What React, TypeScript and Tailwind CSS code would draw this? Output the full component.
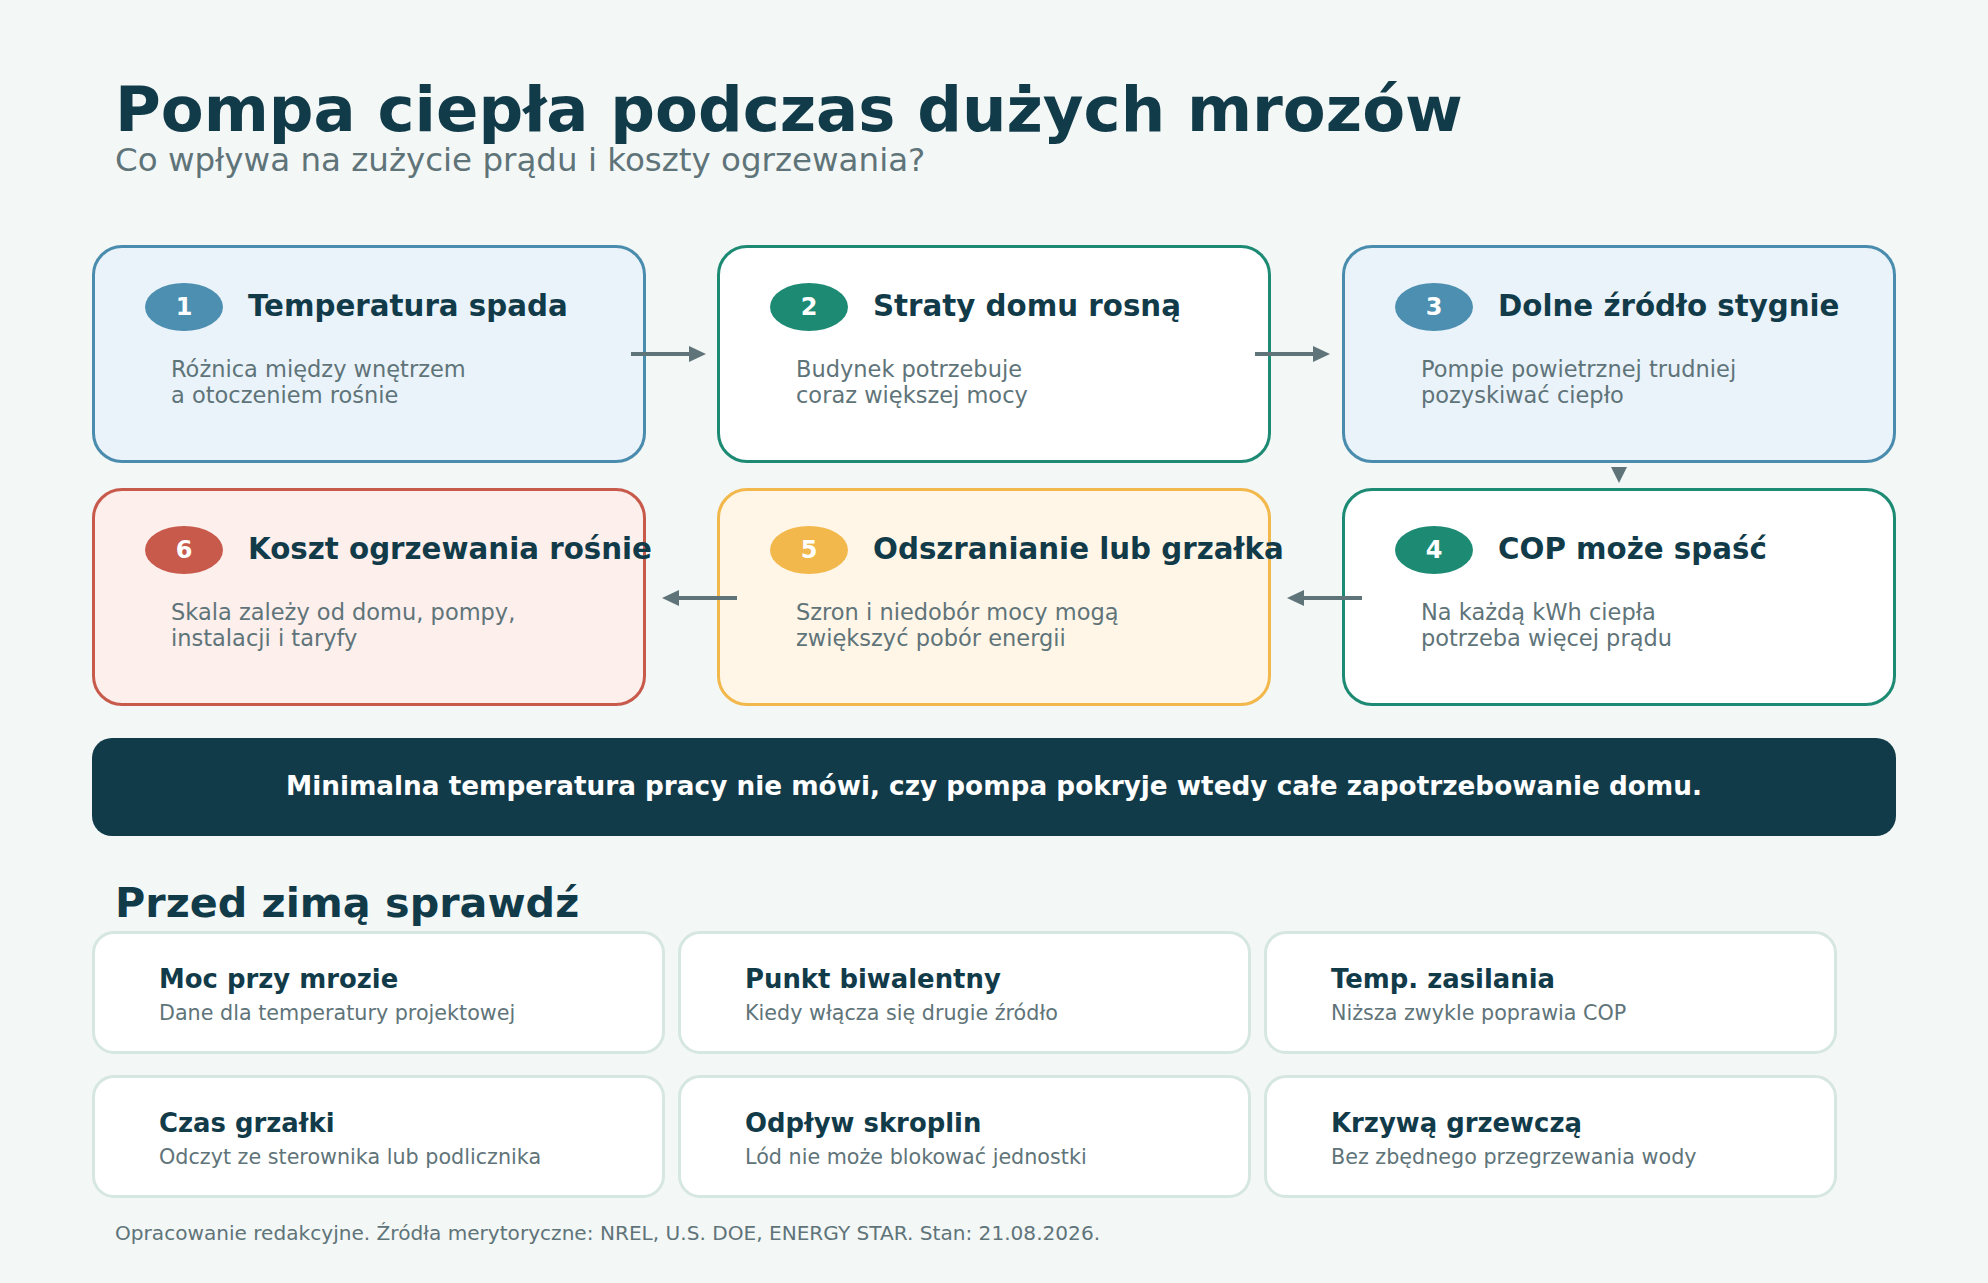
const flow = [
  { n: "1", title: "Temperatura spada", lines: ["Różnica między wnętrzem", "a otoczeniem rośnie"], card: "border-[#4a8cae] bg-[#eaf3f9]", badge: "bg-[#4d8fb0]" },
  { n: "2", title: "Straty domu rosną", lines: ["Budynek potrzebuje", "coraz większej mocy"], card: "border-[#1d8a74] bg-white", badge: "bg-[#1d8a74]" },
  { n: "3", title: "Dolne źródło stygnie", lines: ["Pompie powietrznej trudniej", "pozyskiwać ciepło"], card: "border-[#4a8cae] bg-[#eaf3f9]", badge: "bg-[#4d8fb0]" },
  { n: "6", title: "Koszt ogrzewania rośnie", lines: ["Skala zależy od domu, pompy,", "instalacji i taryfy"], card: "border-[#c85a4c] bg-[#fcefec]", badge: "bg-[#c85a4c]" },
  { n: "5", title: "Odszranianie lub grzałka", lines: ["Szron i niedobór mocy mogą", "zwiększyć pobór energii"], card: "border-[#f2b84b] bg-[#fff6e8]", badge: "bg-[#f2b84b]" },
  { n: "4", title: "COP może spaść", lines: ["Na każdą kWh ciepła", "potrzeba więcej prądu"], card: "border-[#1d8a74] bg-white", badge: "bg-[#1d8a74]" },
];

const checks = [
  { title: "Moc przy mrozie", sub: "Dane dla temperatury projektowej" },
  { title: "Punkt biwalentny", sub: "Kiedy włącza się drugie źródło" },
  { title: "Temp. zasilania", sub: "Niższa zwykle poprawia COP" },
  { title: "Czas grzałki", sub: "Odczyt ze sterownika lub podlicznika" },
  { title: "Odpływ skroplin", sub: "Lód nie może blokować jednostki" },
  { title: "Krzywą grzewczą", sub: "Bez zbędnego przegrzewania wody" },
];

function Arrow({ left = false }: { left?: boolean }) {
  return (
    <svg width="75" height="18" viewBox="0 0 75 18" className={left ? "-scale-x-100" : ""}>
      <line x1="0" y1="9" x2="60" y2="9" stroke="#5f7479" strokeWidth="4" />
      <path d="M58 1 L75 9 L58 17 Z" fill="#5f7479" />
    </svg>
  );
}

export default function App() {
  return (
    <div className="min-h-screen w-full bg-[#f3f7f6] font-['DejaVu_Sans',sans-serif] text-[#123b4a]">
      <div className="w-[1988px] h-[1283px] px-[92px] pt-[79px]">
        <div className="pl-[23px]">
          <h1 className="text-[62.5px] leading-none font-bold whitespace-nowrap">Pompa ciepła podczas dużych mrozów</h1>
          <p className="mt-[2px] text-[32.5px] leading-none text-[#5f7479] whitespace-nowrap">Co wpływa na zużycie prądu i koszty ogrzewania?</p>
        </div>

        <div className="relative mt-[69px]">
          <div className="grid grid-cols-3 gap-x-[71px] gap-y-[25px]">
            {flow.map((f) => (
              <div key={f.n} className={`h-[218px] rounded-[30px] border-[3px] pl-[50px] pt-[35px] ${f.card}`}>
                <div className="flex h-[48px] items-center">
                  <div className={`flex h-[48px] w-[78px] shrink-0 items-center justify-center rounded-[50%] text-[24px] font-bold text-white ${f.badge}`}>
                    {f.n}
                  </div>
                  <div className="ml-[25px] whitespace-nowrap text-[29.3px] leading-none font-bold">{f.title}</div>
                </div>
                <div className="mt-[25px] pl-[26px] text-[22.5px] leading-[26px] text-[#5f7479]">
                  {f.lines.map((l) => (
                    <div key={l} className="whitespace-nowrap">{l}</div>
                  ))}
                </div>
              </div>
            ))}
          </div>
          <div className="absolute left-[539px] top-[100px]"><Arrow /></div>
          <div className="absolute left-[1163px] top-[100px]"><Arrow /></div>
          <div className="absolute left-[1519px] top-[222px]">
            <svg width="16" height="16" viewBox="0 0 16 16">
              <path d="M0 0 L16 0 L8 16 Z" fill="#5f7479" />
            </svg>
          </div>
          <div className="absolute left-[1195px] top-[344px]"><Arrow left /></div>
          <div className="absolute left-[570px] top-[344px]"><Arrow left /></div>
        </div>

        <div className="mt-[32px] flex h-[98px] items-center justify-center rounded-[20px] bg-[#123b4a]">
          <p className="text-[26.3px] font-bold text-white whitespace-nowrap">
            Minimalna temperatura pracy nie mówi, czy pompa pokryje wtedy całe zapotrzebowanie domu.
          </p>
        </div>

        <h2 className="mt-[47px] pl-[23px] text-[41.3px] leading-none font-bold">Przed zimą sprawdź</h2>

        <div className="mt-[7px] grid grid-cols-[573px_573px_573px] gap-x-[13px] gap-y-[21px]">
          {checks.map((c) => (
            <div key={c.title} className="h-[123px] rounded-[22px] border-[3px] border-[#d6e6e1] bg-white pl-[64px] pt-[33px]">
              <div className="text-[25.9px] leading-none font-bold whitespace-nowrap">{c.title}</div>
              <div className="mt-[10px] text-[20.7px] leading-none text-[#5f7479] whitespace-nowrap">{c.sub}</div>
            </div>
          ))}
        </div>

        <p className="mt-[25px] pl-[23px] text-[20.1px] leading-none text-[#5f7479] whitespace-nowrap">
          Opracowanie redakcyjne. Źródła merytoryczne: NREL, U.S. DOE, ENERGY STAR. Stan: 21.08.2026.
        </p>
      </div>
    </div>
  );
}
